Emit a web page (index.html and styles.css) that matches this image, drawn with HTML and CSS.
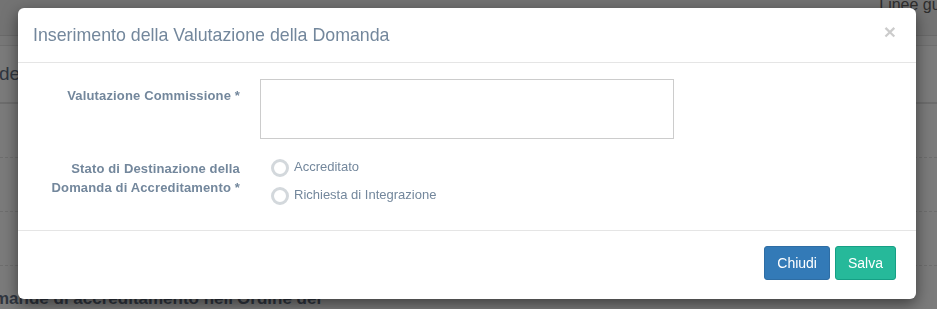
FILE: index.html
```html
<!DOCTYPE html>
<html lang="it">
<head>
  <meta charset="UTF-8">
  <meta name="viewport" content="width=device-width, initial-scale=1.0">
  <title>Valutazione Domanda</title>
  <link rel="stylesheet" href="styles.css">
</head>
<body>
  <!-- page behind the modal, already dimmed -->
  <div class="page">
    <div class="page-top">
      <span class="top-link">Linee guida</span>
    </div>
    <div class="page-band"></div>
    <div class="page-title-row">
      <span class="page-title">de</span>
    </div>
    <div class="page-row"></div>
    <div class="page-row"></div>
    <div class="page-row"></div>
    <div class="page-footer-text">mande di accreditamento nell'Ordine dei</div>
  </div>

  <div class="modal">
    <div class="modal-content">
      <div class="modal-header">
        <h4 class="modal-title">Inserimento della Valutazione della Domanda</h4>
        <button class="close" type="button">&times;</button>
      </div>
      <div class="modal-body">
        <div class="form-group">
          <label class="control-label" for="valutazione">Valutazione Commissione *</label>
          <textarea id="valutazione" class="form-control"></textarea>
        </div>
        <div class="form-group">
          <label class="control-label">Stato di Destinazione della Domanda di Accreditamento *</label>
          <div class="radio-list">
            <label class="radio"><span class="iradio"></span>Accreditato</label>
            <label class="radio"><span class="iradio"></span>Richiesta di Integrazione</label>
          </div>
        </div>
      </div>
      <div class="modal-footer">
        <button class="btn btn-primary" type="button">Chiudi</button>
        <button class="btn btn-success" type="button">Salva</button>
      </div>
    </div>
  </div>
</body>
</html>
```

FILE: styles.css
```css
body {
  margin: 0;
  padding: 0;
  font-family: "Liberation Sans", Arial, sans-serif;
  font-size: 13px;
  color: #73879c;
  background-color: #7b7b7b;
  overflow: hidden;
}

/* background page */
.page {
  height: 309px;
}

.page-top {
  height: 35px;
  background-color: #737373;
  border-bottom: 1px solid #6a6a6a;
  display: flex;
  justify-content: flex-end;
}

.top-link {
  font-size: 16px;
  color: #2e2e2e;
  margin-top: -5px;
  margin-right: -25px;
  line-height: 20px;
}

.page-band {
  height: 9px;
  background-color: #787878;
  border-bottom: 1px solid #6f6f6f;
}

.page-title-row {
  height: 56px;
  border-bottom: 2px solid #6d6d6d;
  display: flex;
  align-items: center;
}

.page-title {
  font-size: 19px;
  color: #303640;
  margin-left: -1px;
}

.page-row {
  height: 53px;
  border-bottom: 1px dashed #6e6e6e;
}

.page-footer-text {
  font-size: 17px;
  font-weight: bold;
  color: #303640;
  margin-top: 23px;
  margin-left: -6px;
  white-space: nowrap;
}

/* modal */
.modal {
  position: fixed;
  top: 0;
  left: 0;
  right: 0;
  bottom: 0;
}

.modal-content {
  margin: 8px 0 0 18px;
  width: 898px;
  height: 291px;
  background-color: #fff;
  border-radius: 6px;
  box-shadow: 0 5px 15px rgba(0, 0, 0, 0.5);
  display: flex;
  flex-direction: column;
}

.modal-header {
  display: flex;
  justify-content: space-between;
  align-items: center;
  height: 54px;
  padding: 0 15px;
  border-bottom: 1px solid #e5e5e5;
}

.modal-title {
  margin: 0;
  font-size: 17.8px;
  font-weight: normal;
  color: #73879c;
}

.close {
  border: none;
  background: none;
  padding: 0;
  margin-right: 5px;
  margin-top: -8px;
  font-family: "Liberation Sans", Arial, sans-serif;
  font-size: 21px;
  font-weight: bold;
  line-height: 1;
  color: #000;
  opacity: 0.2;
  cursor: pointer;
}

.modal-body {
  height: 151px;
  padding: 16px 16px 0;
  border-bottom: 1px solid #e5e5e5;
}

.form-group {
  display: grid;
  grid-template-columns: 206px 414px;
  column-gap: 20px;
  margin-bottom: 13px;
}

.control-label {
  font-weight: bold;
  text-align: right;
  line-height: 19px;
  letter-spacing: 0.15px;
  padding-top: 7px;
}

.form-control {
  box-sizing: border-box;
  height: 60px;
  margin: 0;
  border: 1px solid #ccc;
  border-radius: 0;
  resize: none;
  font-family: inherit;
}

.radio-list {
  display: flex;
  flex-direction: column;
  gap: 9px;
  padding-left: 11px;
  padding-top: 5px;
}

.radio {
  display: flex;
  align-items: center;
  gap: 5px;
  font-weight: normal;
  line-height: 19px;
  height: 19px;
}

.iradio {
  box-sizing: border-box;
  width: 18px;
  height: 18px;
  border: 3px solid #d3d8dc;
  border-radius: 50%;
  background-color: #fff;
  margin-top: 3px;
}

.modal-footer {
  display: flex;
  justify-content: flex-end;
  gap: 5px;
  padding: 15px 20px;
}

.btn {
  box-sizing: border-box;
  height: 34px;
  padding: 6px 12px;
  font-family: "Liberation Sans", Arial, sans-serif;
  font-size: 14px;
  color: #fff;
  border: 1px solid transparent;
  border-radius: 3px;
  cursor: pointer;
}

.btn-primary {
  background-color: #337ab7;
  border-color: #2e6da4;
}

.btn-success {
  background-color: #26b99a;
  border-color: #169f85;
}
```
